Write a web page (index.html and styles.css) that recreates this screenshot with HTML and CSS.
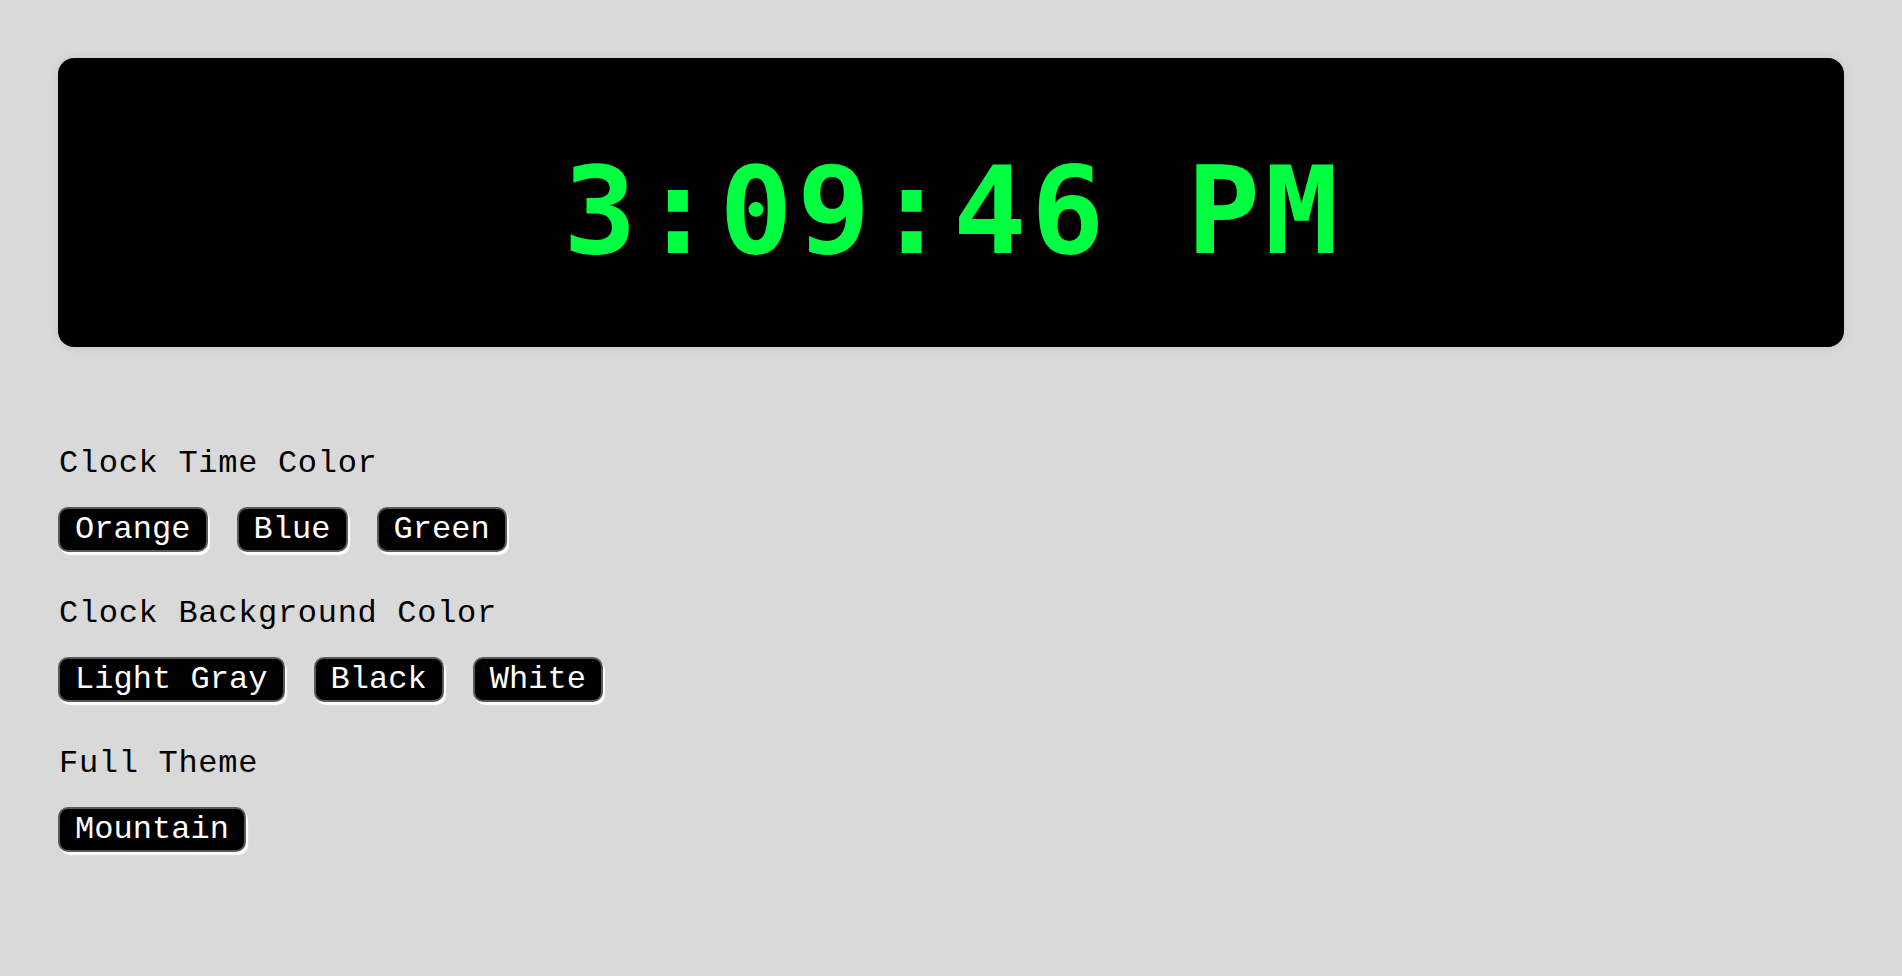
FILE: index.html
```html
<!DOCTYPE html>
<html lang="en">
<head>
<meta charset="utf-8">
<title>Clock</title>
<link rel="stylesheet" href="styles.css">
</head>
<body>
<main class="page">
  <section class="clock">
    <div class="clock-time">3:09:46 PM</div>
  </section>
  <section class="controls">
    <div class="group">
      <h2 class="group-label">Clock Time Color</h2>
      <div class="btn-row">
        <button class="btn">Orange</button>
        <button class="btn">Blue</button>
        <button class="btn">Green</button>
      </div>
    </div>
    <div class="group">
      <h2 class="group-label">Clock Background Color</h2>
      <div class="btn-row">
        <button class="btn">Light Gray</button>
        <button class="btn">Black</button>
        <button class="btn">White</button>
      </div>
    </div>
    <div class="group">
      <h2 class="group-label">Full Theme</h2>
      <div class="btn-row">
        <button class="btn">Mountain</button>
      </div>
    </div>
  </section>
</main>
</body>
</html>
```
FILE: styles.css
```css
html, body {
  margin: 0;
  padding: 0;
  background: #d9d9d9;
}

body {
  font-family: "Liberation Mono", "DejaVu Sans Mono", monospace;
  color: #000;
}

.page {
  padding: 58px;
}

.clock {
  height: 289px;
  background: #000;
  border-radius: 16px;
  box-shadow: 0 0 12px rgba(0, 0, 0, 0.08);
  display: flex;
  align-items: center;
  justify-content: center;
  box-sizing: border-box;
  padding-top: 16px;
  padding-left: 4px;
}

.clock-time {
  font-family: "DejaVu Sans Mono", monospace;
  font-weight: bold;
  font-size: 122px;
  letter-spacing: 4.5px;
  color: #00ff41;
  white-space: nowrap;
}

.controls {
  margin-top: 99px;
}

.group {
  margin-bottom: 44px;
}

.group-label {
  margin: 0 0 25px 0;
  font-size: 32px;
  line-height: 36px;
  font-weight: normal;
  letter-spacing: 0.7px;
  padding-left: 1px;
}

.btn-row {
  display: flex;
  gap: 29px;
}

.btn {
  font-family: "Liberation Mono", "DejaVu Sans Mono", monospace;
  font-size: 32px;
  line-height: 37px;
  letter-spacing: 0.05px;
  padding: 2px 15px;
  color: #fff;
  background: #000;
  border: 2px solid #5a5a5a;
  border-radius: 10px;
  box-shadow: 2px 3px 1px #fff;
  cursor: pointer;
}
```
